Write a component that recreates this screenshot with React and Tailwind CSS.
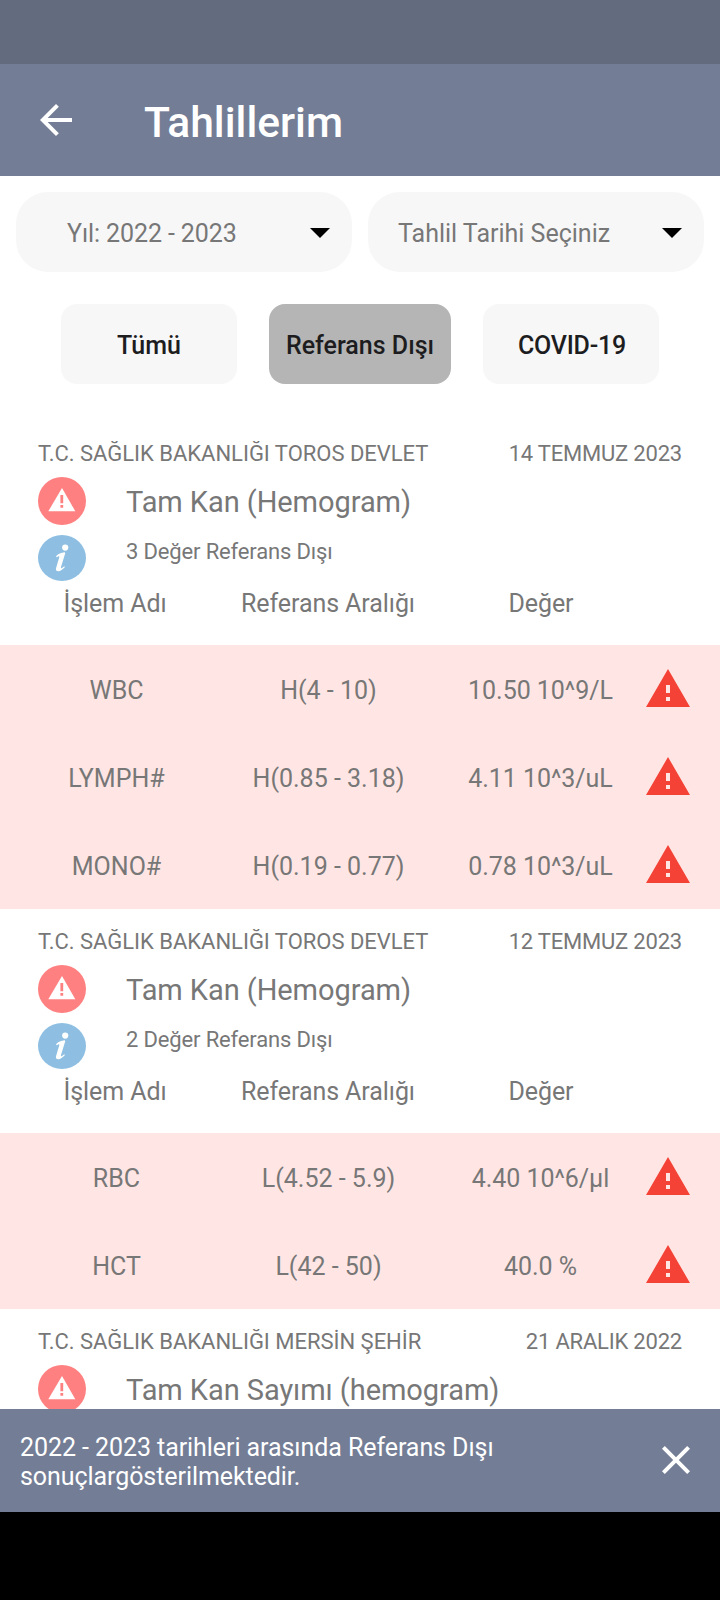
import React from 'react';

const records = [
  {
    hospital: 'T.C. SAĞLIK BAKANLIĞI TOROS DEVLET',
    date: '14 TEMMUZ 2023',
    name: 'Tam Kan (Hemogram)',
    note: '3 Değer Referans Dışı',
    rows: [
      { test: 'WBC', range: 'H(4 - 10)', value: '10.50 10^9/L' },
      { test: 'LYMPH#', range: 'H(0.85 - 3.18)', value: '4.11 10^3/uL' },
      { test: 'MONO#', range: 'H(0.19 - 0.77)', value: '0.78 10^3/uL' },
    ],
  },
  {
    hospital: 'T.C. SAĞLIK BAKANLIĞI TOROS DEVLET',
    date: '12 TEMMUZ 2023',
    name: 'Tam Kan (Hemogram)',
    note: '2 Değer Referans Dışı',
    rows: [
      { test: 'RBC', range: 'L(4.52 - 5.9)', value: '4.40 10^6/µl' },
      { test: 'HCT', range: 'L(42 - 50)', value: '40.0 %' },
    ],
  },
  {
    hospital: 'T.C. SAĞLIK BAKANLIĞI MERSİN ŞEHİR',
    date: '21 ARALIK 2022',
    name: 'Tam Kan Sayımı (hemogram)',
    rows: [],
  },
];

const filters = [
  { label: 'Tümü', className: 'w-44 bg-[#f7f7f7]' },
  { label: 'Referans Dışı', className: 'w-[182px] bg-[#b5b5b5]' },
  { label: 'COVID-19', className: 'w-44 bg-[#f7f7f7] pl-0.5 tracking-[-0.2px]' },
];

const WarningCircle = () => (
  <svg className="size-12 shrink-0" viewBox="0 0 48 48">
    <circle cx="24" cy="24" r="24" fill="#ff8080" />
    <path d="M24 11 37.3 34.3H10.3Z" fill="#fff" />
    <path d="M22.4 18h2.8v8.3h-2.8zM22.4 28h2.8v2.8h-2.8z" fill="#ff8080" />
  </svg>
);

const InfoCircle = () => (
  <svg className="h-[46px] w-12 shrink-0" viewBox="0 0 48 46">
    <ellipse cx="24" cy="23" rx="24" ry="23" fill="#8ebfe2" />
    <circle cx="27.2" cy="12.6" r="3.1" fill="#fff" />
    <path
      d="M18 21.2c2.4-2.3 5-3.6 8.6-3.9l.7.6-4.3 14.2c-.3 1.2.2 1.5 1 .9l2.2-1.7.7.7c-2.2 2.7-4.5 4.2-6.6 4.2-2 0-2.8-1.3-2.2-3.300l3.100-10.500c.3-1.100-.2-1.300-1-.8l-1.500.7z"
      fill="#fff"
    />
  </svg>
);

const WarningTriangle = () => (
  <svg className="-ml-0.5 size-12" viewBox="0 0 24 24" fill="#f44336">
    <path d="M1 21h22L12 2 1 21zm12-3h-2v-2h2v2zm0-4h-2v-4h2v4z" />
  </svg>
);

const Select = ({ label, className }) => (
  <div className={`flex h-20 w-[336px] items-center justify-between rounded-[32px] bg-[#f7f7f7] pt-[3px] pr-[22px] ${className}`}>
    <span className="pt-px text-[25px] text-[#777]">{label}</span>
    <svg className="mb-0.5 h-[10px] w-5" viewBox="0 0 20 10">
      <path d="M0 0h20L10 10z" />
    </svg>
  </div>
);

const Record = ({ record }) => (
  <section>
    <div className="flex h-14 items-center justify-between pt-[9px] pr-[38px] pl-[38px] text-[22px] leading-[26px]">
      <span className="tracking-[-0.02px]">{record.hospital}</span>
      <span className="tracking-[-0.2px]">{record.date}</span>
    </div>
    <div className="flex h-[58px] pl-[38px]">
      <WarningCircle />
      <h2 className="pt-2 pl-10 text-[29px] leading-[34px] tracking-[-0.06px]">{record.name}</h2>
    </div>
    {record.note && (
      <>
        <div className="flex h-[46px] pl-[38px]">
          <InfoCircle />
          <p className="pt-1 pl-10 text-[22px] leading-[26px] tracking-[-0.15px]">{record.note}</p>
        </div>
        <div className="grid h-16 grid-cols-[212px_214px_212px] pt-2 pl-[9px] text-center text-[25px] leading-[30px] tracking-[-0.08px]">
          <span>İşlem Adı</span>
          <span>Referans Aralığı</span>
          <span>Değer</span>
        </div>
      </>
    )}
    {record.rows.map((row) => (
      <div
        key={row.test}
        className="grid h-[88px] grid-cols-[212px_212px_212px_48px] items-center bg-[#ffe6e4] pl-[10px] text-center text-[25px]"
      >
        <span className="pt-1 pl-px">{row.test}</span>
        <span className="pt-1 pl-px">{row.range}</span>
        <span className="pt-1 pl-px tracking-[-0.05px]">{row.value}</span>
        <WarningTriangle />
      </div>
    ))}
  </section>
);

export default function App() {
  return (
    <div className="flex h-[1600px] w-[720px] flex-col overflow-hidden bg-white font-['Roboto',sans-serif] text-[#777]">
      <div className="h-16 shrink-0 bg-[#636b7f]" />
      <header className="flex h-28 shrink-0 items-center bg-[#737d95] pl-8 text-white">
        <svg className="size-12" viewBox="0 0 24 24" fill="currentColor">
          <path d="M20 11H7.83l5.59-5.59L12 4l-8 8 8 8 1.41-1.41L7.83 13H20v-2z" />
        </svg>
        <h1 className="pt-1.5 pl-16 text-[42.6px] font-medium">Tahlillerim</h1>
      </header>

      <div className="flex shrink-0 gap-4 px-4 pt-4">
        <Select label="Yıl: 2022 - 2023" className="pl-[51px] tracking-[-0.1px]" />
        <Select label="Tahlil Tarihi Seçiniz" className="pl-[30px]" />
      </div>

      <div className="flex shrink-0 justify-center gap-8 pt-8">
        {filters.map((filter) => (
          <button
            key={filter.label}
            className={`h-20 rounded-2xl pt-1 text-[25px] font-medium text-[#1d1d1f] ${filter.className}`}
          >
            {filter.label}
          </button>
        ))}
      </div>

      <main className="mt-[37px] min-h-0 flex-1 overflow-hidden">
        {records.map((record) => (
          <Record key={record.date} record={record} />
        ))}
      </main>

      <div className="flex h-[103px] shrink-0 items-center justify-between bg-[#737d95] pr-5 pb-0.5 pl-5 text-[25px] leading-[29px] text-white">
        <p className="w-[520px] pt-1 tracking-[-0.07px]">
          2022 - 2023 tarihleri arasında Referans Dışı sonuçlargösterilmektedir.
        </p>
        <svg className="size-12" viewBox="0 0 24 24" fill="currentColor">
          <path d="M19 6.41L17.59 5 12 10.59 6.41 5 5 6.41 10.59 12 5 17.59 6.41 19 12 13.41 17.59 19 19 17.59 13.41 12z" />
        </svg>
      </div>
      <div className="h-[88px] shrink-0 bg-black" />
    </div>
  );
}
